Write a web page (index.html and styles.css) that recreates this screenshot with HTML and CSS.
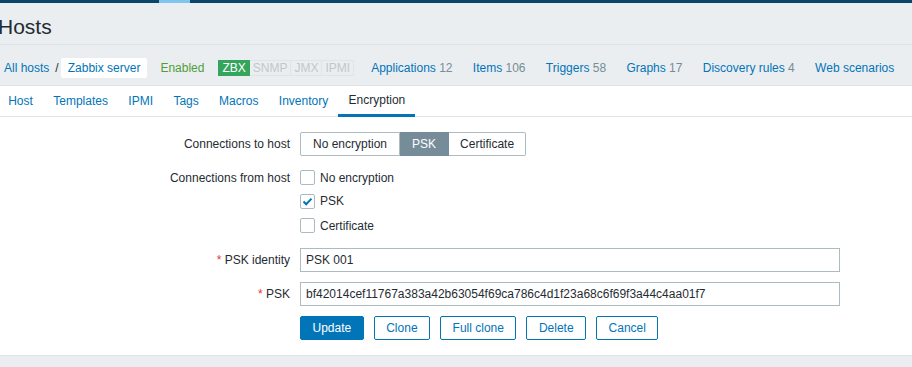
FILE: index.html
```html
<!DOCTYPE html>
<html lang="en">
<head>
    <meta charset="UTF-8">
    <title>Hosts</title>
    <link rel="stylesheet" href="styles.css">
</head>
<body>
    <div class="top-bar">
        <span class="bar-dark bar-left"></span>
        <span class="bar-light"></span>
        <span class="bar-dark bar-rest"></span>
    </div>

    <div class="header-title">
        <h1>Hosts</h1>
    </div>

    <div class="host-nav">
        <a href="#">All hosts</a>
        <span class="sep">/</span>
        <span class="current-host">Zabbix server</span>
        <span class="status-enabled">Enabled</span>
        <span class="status-box">
            <span class="status on">ZBX</span><span class="status">SNMP</span><span class="status">JMX</span><span class="status">IPMI</span>
        </span>
        <a class="nav-link first" href="#">Applications <span class="count">12</span></a>
        <a class="nav-link" href="#">Items <span class="count">106</span></a>
        <a class="nav-link" href="#">Triggers <span class="count">58</span></a>
        <a class="nav-link" href="#">Graphs <span class="count">17</span></a>
        <a class="nav-link" href="#">Discovery rules <span class="count">4</span></a>
        <a class="nav-link" href="#">Web scenarios</a>
    </div>

    <div class="tabs">
        <a class="tab" href="#">Host</a>
        <a class="tab" href="#">Templates</a>
        <a class="tab" href="#">IPMI</a>
        <a class="tab" href="#">Tags</a>
        <a class="tab" href="#">Macros</a>
        <a class="tab" href="#">Inventory</a>
        <a class="tab active" href="#">Encryption</a>
    </div>

    <div class="form-container">
        <div class="form-grid">
            <label class="form-label">Connections to host</label>
            <div class="radio-group">
                <span class="radio">No encryption</span><span class="radio selected">PSK</span><span class="radio">Certificate</span>
            </div>

            <label class="form-label">Connections from host</label>
            <div class="checkbox-list">
                <div class="check-row"><span class="checkbox"></span>No encryption</div>
                <div class="check-row">
                    <span class="checkbox">
                        <svg width="13" height="13" viewBox="0 0 13 13"><path d="M2.5 6.5 L5.2 9.2 L10.5 3.6" fill="none" stroke="#0275b8" stroke-width="2"/></svg>
                    </span>PSK
                </div>
                <div class="check-row"><span class="checkbox"></span>Certificate</div>
            </div>

            <label class="form-label"><span class="required">*</span> PSK identity</label>
            <input class="text-input" type="text" value="PSK 001">

            <label class="form-label"><span class="required">*</span> PSK</label>
            <input class="text-input" type="text" value="bf42014cef11767a383a42b63054f69ca786c4d1f23a68c6f69f3a44c4aa01f7">

            <span></span>
            <div class="buttons">
                <button class="btn primary">Update</button>
                <button class="btn">Clone</button>
                <button class="btn">Full clone</button>
                <button class="btn">Delete</button>
                <button class="btn">Cancel</button>
            </div>
        </div>
    </div>
</body>
</html>
```

FILE: styles.css
```css
body {
    margin: 0;
    font-family: "Liberation Sans", Arial, sans-serif;
    font-size: 12px;
    color: #1f2c33;
    background-color: #ebeef0;
}
a {
    color: #0275b8;
    text-decoration: none;
}
.top-bar {
    display: flex;
    height: 3px;
}
.bar-dark {
    background-color: #0a466a;
}
.bar-left {
    width: 159px;
}
.bar-light {
    width: 31px;
    background-color: #7ec5f2;
}
.bar-rest {
    flex: 1;
}
.header-title {
    height: 41px;
    border-bottom: 1px solid #dfe4e7;
}
.header-title h1 {
    margin: 0;
    padding-top: 6px;
    font-size: 21px;
    font-weight: normal;
    line-height: 35px;
    text-indent: -2px;
}
.host-nav {
    display: flex;
    align-items: center;
    height: 35px;
    padding: 5px 0 0 4px;
    border-bottom: 1px solid #dfe4e7;
    white-space: nowrap;
}
.sep {
    margin: 0 2px 0 6px;
    color: #1f2c33;
}
.current-host {
    background: white;
    color: #0275b8;
    padding: 0 7px;
    line-height: 20px;
    border-radius: 2px;
}
.status-enabled {
    margin-left: 13px;
    color: #4f9e3a;
}
.status-box {
    display: flex;
    margin-left: 14px;
}
.status {
    padding: 0 3px;
    line-height: 14px;
    border: 1px solid #dfe4e7;
    border-left: none;
    color: #bfc8cd;
}
.status.on {
    border-left: 1px solid #34a55c;
    background-color: #34a55c;
    border-color: #34a55c;
    color: white;
}
.nav-link {
    margin-left: 20.3px;
}
.nav-link.first {
    margin-left: 17px;
}
.count {
    color: #768d99;
}
.tabs {
    display: flex;
    height: 30px;
    background: white;
    border-bottom: 1px solid #dfe4e7;
}
.tab {
    padding: 0 10.2px;
    line-height: 30px;
}
.tab:first-child {
    margin-left: -2px;
}
.tab.active {
    color: #1f2c33;
    line-height: 28px;
    border-bottom: 3px solid #0275b8;
    height: 28px;
}
.form-container {
    background: white;
    padding: 15px 0;
    border-bottom: 1px solid #dfe4e7;
}
.form-grid {
    display: grid;
    grid-template-columns: 290px 540px;
    column-gap: 10px;
    row-gap: 10px;
}
.form-label {
    text-align: right;
    line-height: 24px;
}
.required {
    color: #e33734;
}
.radio-group {
    display: flex;
}
.radio {
    padding: 0 12px;
    line-height: 22px;
    border: 1px solid #acbbc2;
    border-left: none;
}
.radio:first-child {
    border-left: 1px solid #acbbc2;
    border-radius: 2px 0 0 2px;
}
.radio:last-child {
    padding: 0 11px;
    border-radius: 0 2px 2px 0;
}
.radio.selected {
    background-color: #768d99;
    border-color: #768d99;
    color: white;
}
.checkbox-list {
    display: flex;
    flex-direction: column;
}
.check-row {
    display: flex;
    align-items: center;
    height: 23.5px;
}
.check-row:last-child {
    height: 25px;
}
.checkbox {
    box-sizing: border-box;
    width: 15px;
    height: 15px;
    border: 1px solid #acbbc2;
    border-radius: 2px;
    margin-right: 5px;
    display: flex;
    align-items: center;
    justify-content: center;
}
.text-input {
    box-sizing: border-box;
    width: 540px;
    height: 24px;
    margin: 0;
    padding: 0 5px;
    border: 1px solid #acbbc2;
    font-family: inherit;
    font-size: 12px;
    color: #1f2c33;
}
.buttons {
    display: flex;
    gap: 10px;
}
.btn {
    height: 24px;
    padding: 0 11.5px;
    border: 1px solid #0275b8;
    border-radius: 2px;
    background: white;
    color: #0275b8;
    font-family: inherit;
    font-size: 12px;
}
.btn.primary {
    background-color: #0275b8;
    color: white;
}
```
